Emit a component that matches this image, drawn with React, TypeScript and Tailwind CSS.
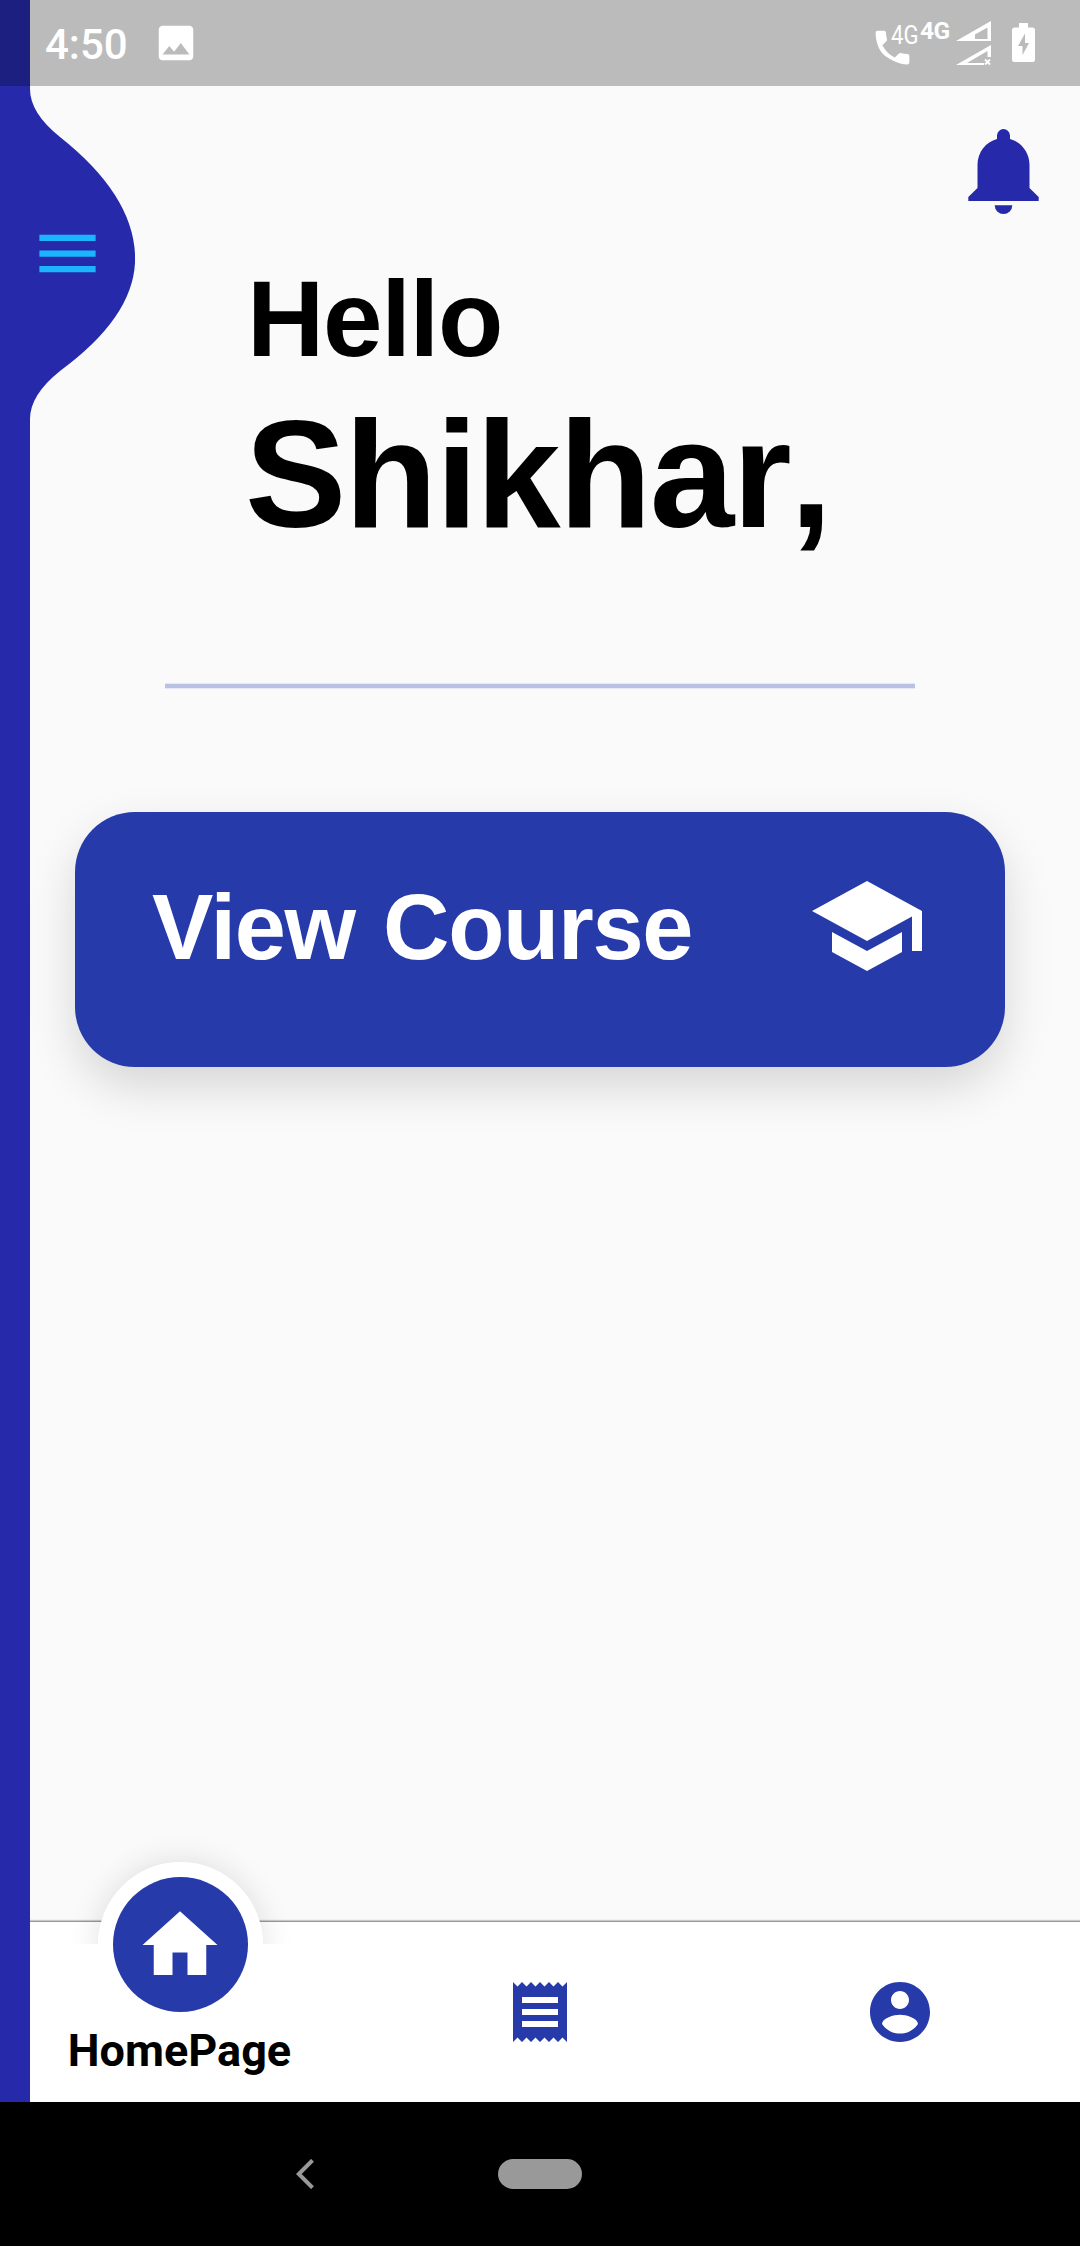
import React from "react";

function StatusBar() {
  return (
    <header className="absolute inset-x-0 top-0 z-20 flex h-[86px] items-start bg-black/25 text-white">
      <span className="ml-[45px] mt-[20px] w-[108px] font-['Roboto',sans-serif] text-[42px] font-medium leading-[50px]">
        4:50
      </span>
      <svg className="mt-[20px] size-[46px]" viewBox="0 0 24 24" fill="currentColor">
        <path d="M21 19V5c0-1.1-.9-2-2-2H5c-1.1 0-2 .9-2 2v14c0 1.1.9 2 2 2h14c1.1 0 2-.9 2-2zM8.5 13.5l2.5 3.01L14.5 12l4.5 6H5l3.500-4.500z" />
      </svg>
      <svg className="ml-auto mt-[25px] size-[45px] shrink-0" viewBox="0 0 24 24" fill="currentColor">
        <path d="M6.540 15.120c1.200 1.200 2.600 2.250 4.100 3 1.700 1 3.500 1.800 5.500 2.400 1.300.300 2.600.480 3.860.480.550 0 1-.450 1-1v-3.490c0-.550-.450-1-1-1-1.240 0-2.450-.200-3.570-.570-.350-.110-.740-.030-1.020.240l-2.200 2.200c-2.830-1.440-5.150-3.750-6.590-6.590l2.200-2.200c.280-.280.360-.670.250-1.020C8.700 6.450 8.500 5.250 8.500 4c0-.550-.450-1-1-1H4c-.550 0-1 .450-1 1 0 4.300 1.300 8.300 3.540 11.120z" />
      </svg>
      <span className="-ml-[24px] mt-[20px] block w-[29px] origin-left scale-x-[0.85] font-['Roboto',sans-serif] text-[26px] leading-[30px]">
        4G
      </span>
      <span className="mt-[16px] block w-[36px] font-['Roboto',sans-serif] text-[24.500px] font-bold leading-[30px] tracking-[-0.5px]">
        4G
      </span>
      <svg className="mt-[20px] h-[46px] w-[36px]" viewBox="0 0 36 46" fill="currentColor">
        <path fillRule="evenodd" d="M0 21L35 1v20H0zM19 19h12.500V7.500L19 14.500V19z" />
        <path d="M0 45L35 25v12h-3.500v-6L11 43h17v2H0z" />
        <path d="M29 39.500l5 5M34 39.500l-5 5" stroke="currentColor" strokeWidth="1.800" />
      </svg>
      <svg className="ml-[20px] mr-[45px] mt-[23px] h-[39px] w-[23px]" viewBox="0 0 23 39">
        <path fill="white" d="M7 0h9v4.500h4.500a2.500 2.500 0 0 1 2.500 2.500v29.500a2.500 2.500 0 0 1-2.500 2.500h-18a2.500 2.500 0 0 1-2.500-2.500v-29.500a2.500 2.500 0 0 1 2.500-2.500h4.500z" />
        <path fill="#bbbbbb" d="M13 10.500L6 23h4.500v9L17 20h-4z" />
      </svg>
    </header>
  );
}

function SideDrawer() {
  return (
    <aside className="relative z-10 w-[30px] shrink-0 bg-[#262aaa]">
      <svg className="absolute left-[30px] top-[89px] h-[330px] w-[105px]" viewBox="0 0 105 330" fill="#262aaa">
        <path d="M0 0Q0 24 30 48Q102 105 105 165Q108 225 30 282Q0 306 0 330Z" />
      </svg>
      <svg className="absolute left-[30px] top-[216px] size-[75px]" viewBox="0 0 24 24" fill="#1bb5fd">
        <path d="M3 18h18v-2H3v2zm0-5h18v-2H3v2zm0-7v2h18V6H3z" />
      </svg>
    </aside>
  );
}

function NavTab({ children }: { children: React.ReactNode }) {
  return <div className="flex w-[360px] items-center justify-center text-[#263aaa]">{children}</div>;
}

function BottomNav() {
  return (
    <nav className="relative -ml-[30px] flex h-[181px] border-t border-[#999999] bg-white shadow-[0_-1px_1px_rgba(0,0,0,0.2)]">
      <div className="flex w-[360px] flex-col items-center">
        <div className="relative -mt-[60px] flex h-[165px] w-[165px] shrink-0 items-center justify-center">
          <div className="absolute -left-[60px] -top-[60px] h-[142px] w-[285px] overflow-hidden">
            <div className="ml-[60px] mt-[60px] size-[165px] rounded-full shadow-[0_0_32px_rgba(0,0,0,0.12)]" />
          </div>
          <div className="relative flex size-[165px] items-center justify-center rounded-full bg-white">
            <div className="flex size-[135px] items-center justify-center rounded-full bg-[#263aaa]">
              <svg className="size-[90px]" viewBox="0 0 24 24" fill="white">
                <path d="M10 20v-6h4v6h5v-8h3L12 3 2 12h3v8z" />
              </svg>
            </div>
          </div>
        </div>
        <span className="-mt-[2px] mr-px font-['Roboto',sans-serif] text-[45px] font-bold leading-[52px] text-black">
          HomePage
        </span>
      </div>
      <NavTab>
        <svg className="size-[72px]" viewBox="0 0 24 24" fill="currentColor">
          <path d="M18 17H6v-2h12v2zm0-4H6v-2h12v2zm0-4H6V7h12v2zM3 22l1.500-1.500L6 22l1.500-1.500L9 22l1.500-1.500L12 22l1.500-1.500L15 22l1.500-1.500L18 22l1.500-1.500L21 22V2l-1.500 1.500L18 2l-1.500 1.500L15 2l-1.500 1.500L12 2l-1.500 1.500L9 2 7.500 3.500 6 2 4.500 3.500 3 2v20z" />
        </svg>
      </NavTab>
      <NavTab>
        <svg className="size-[72px]" viewBox="0 0 24 24" fill="currentColor">
          <path d="M12 2C6.480 2 2 6.480 2 12s4.480 10 10 10 10-4.480 10-10S17.520 2 12 2zm0 3c1.660 0 3 1.340 3 3s-1.340 3-3 3-3-1.340-3-3 1.340-3 3-3zm0 14.200c-2.500 0-4.710-1.280-6-3.220.030-1.990 4-3.080 6-3.080 1.990 0 5.970 1.090 6 3.080-1.290 1.940-3.500 3.220-6 3.220z" />
        </svg>
      </NavTab>
    </nav>
  );
}

export default function App() {
  return (
    <div className="relative flex h-[2246px] w-[1080px] flex-col overflow-hidden bg-[#fafafa] font-['Liberation_Sans',sans-serif]">
      <StatusBar />
      <div className="flex h-[2102px] shrink-0">
        <SideDrawer />
        <main className="flex w-[1050px] flex-col">
          <div className="flex h-[266px] shrink-0 justify-end pr-[41px] pt-[129px]">
            <svg className="h-[86px] w-[71px]" viewBox="0 0 71 86" fill="#262aaa">
              <path d="M35.500 0A6.700 6.700 0 0 1 42 6.500V10C53 13 61.500 23 61.500 36V59L70.700 68V72H.300V68L9.500 59V36C9.500 23 18 13 29 10V6.500A6.700 6.700 0 0 1 35.500 0Z" />
              <path d="M26.700 76.300H44.300A8.800 8.800 0 0 1 26.700 76.300Z" />
            </svg>
          </div>
          <div className="ml-[215px] flex h-[418px] shrink-0 flex-col whitespace-nowrap font-bold text-black">
            <p className="ml-[2px] text-[107px] leading-[107px] tracking-[-1.300px]">Hello</p>
            <p className="mt-[25px] text-[152px] leading-[153px] tracking-[-1.800px] [font-kerning:none]">Shikhar,</p>
          </div>
          <div className="-mt-px ml-[135px] h-[6px] w-[750px] shrink-0 border-y border-[#e6e8f6] bg-[#b9c1e4]" />
          <button className="ml-[45px] mt-[123px] flex h-[255px] w-[930px] shrink-0 items-start rounded-[60px] bg-[#263aaa] pl-[77px] pr-[78px] text-white shadow-[0_20px_48px_rgba(0,0,0,0.145)]">
            <span className="mt-[69px] whitespace-nowrap text-[92px] font-bold leading-[92px] tracking-[-1.300px] [word-spacing:4px]">View Course</span>
            <svg className="ml-auto mt-[54px] size-[120px] shrink-0" viewBox="0 0 24 24" fill="currentColor">
              <path d="M5 13.180v4L12 21l7-3.820v-4L12 17l-7-3.820zM12 3L1 9l11 6 9-4.910V17h2V9L12 3z" />
            </svg>
          </button>
          <div className="mt-auto">
            <BottomNav />
          </div>
        </main>
      </div>
      <footer className="flex h-[144px] shrink-0 items-center bg-black">
        <svg className="-mt-px ml-[296px] h-[30px] w-[18px]" viewBox="0 0 18 30" fill="none" stroke="#999999" strokeWidth="4">
          <path d="M16.500 1.300L2.800 15L16.500 28.700" />
        </svg>
        <div className="ml-[184px] h-[30px] w-[84px] rounded-full bg-[#999999]" />
      </footer>
    </div>
  );
}
